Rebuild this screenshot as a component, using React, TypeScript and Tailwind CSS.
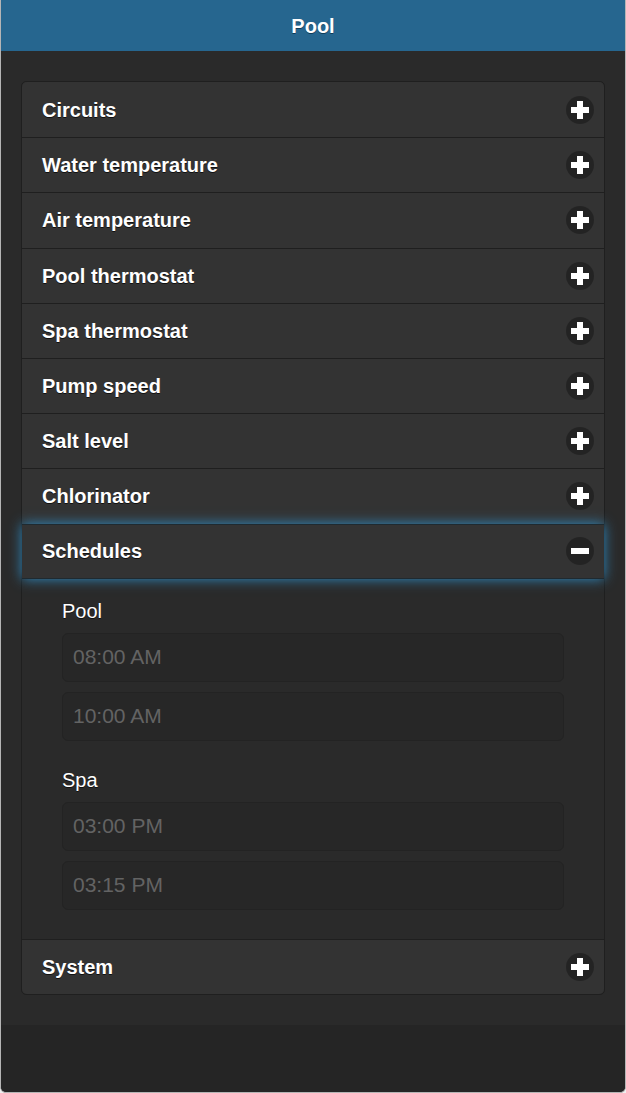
import React from "react";

const font = { fontFamily: '"Liberation Sans", Arial, sans-serif' };

function PlusIcon() {
  return (
    <svg width="28" height="28" viewBox="0 0 28 28" className="shrink-0">
      <circle cx="14" cy="14" r="14" fill="rgba(0,0,0,0.3)" />
      <rect x="5" y="11" width="18" height="6" fill="#fff" />
      <rect x="11" y="5" width="6" height="18" fill="#fff" />
    </svg>
  );
}

function MinusIcon() {
  return (
    <svg width="28" height="28" viewBox="0 0 28 28" className="shrink-0">
      <circle cx="14" cy="14" r="14" fill="rgba(0,0,0,0.3)" />
      <rect x="5" y="11" width="18" height="6" fill="#fff" />
    </svg>
  );
}

function Heading({ title, first, open, last }: { title: string; first?: boolean; open?: boolean; last?: boolean }) {
  return (
    <div
      className={
        "relative flex h-[55.2px] items-center justify-between bg-[#333333] pl-[20px] pr-[10px] " +
        (first ? "rounded-t-[5px] " : "border-t border-[#1f1f1f] ") +
        (last ? "rounded-b-[5px] " : "") +
        (open ? "z-10 border-b border-[#1f2a30] shadow-[0_0_12px_#2f8cc4] " : "")
      }
    >
      <span className="text-[20px] font-bold leading-[26px] text-white [text-shadow:0_1px_0_#111]">{title}</span>
      {open ? <MinusIcon /> : <PlusIcon />}
    </div>
  );
}

function TimeInput({ value, first }: { value: string; first?: boolean }) {
  return (
    <div
      className={
        "flex h-[49px] items-center rounded-[6px] border border-[#232323] bg-[#272727] pl-[10px] text-[21px] text-[#636363] " +
        (first ? "" : "mt-[10px]")
      }
    >
      {value}
    </div>
  );
}

function Group({ label, times, first }: { label: string; times: string[]; first?: boolean }) {
  return (
    <div className={first ? "" : "mt-[26px]"}>
      <div className="mb-[9px] text-[20px] leading-[26px] text-white [text-shadow:0_1px_0_#111]">{label}</div>
      {times.map((t, i) => (
        <TimeInput key={t} value={t} first={i === 0} />
      ))}
    </div>
  );
}

export default function App() {
  const items = [
    "Circuits",
    "Water temperature",
    "Air temperature",
    "Pool thermostat",
    "Spa thermostat",
    "Pump speed",
    "Salt level",
    "Chlorinator",
  ];
  return (
    <div className="h-[1093px] w-[626px] bg-[#f0f0f0]" style={font}>
      <div className="flex h-full flex-col overflow-hidden rounded-b-[6px] border-x border-b border-[#b5b5b5] bg-[#2a2a2a]">
        <div className="flex h-[51px] shrink-0 items-center justify-center bg-[#26668f]">
          <span className="text-[20px] font-bold text-white [text-shadow:0_1px_0_#0f3b58]">Pool</span>
        </div>
        <div className="px-[20px] pb-[30px] pt-[30px]">
          <div className="rounded-[5px] border border-[#1f1f1f]">
            {items.map((t, i) => (
              <Heading key={t} title={t} first={i === 0} />
            ))}
            <Heading title="Schedules" open />
            <div className="bg-[#2a2a2a] px-[40px] pb-[29px] pt-[19px]">
              <Group label="Pool" times={["08:00 AM", "10:00 AM"]} first />
              <Group label="Spa" times={["03:00 PM", "03:15 PM"]} />
            </div>
            <Heading title="System" last />
          </div>
        </div>
        <div className="flex-1 bg-[#252525]" />
      </div>
    </div>
  );
}
